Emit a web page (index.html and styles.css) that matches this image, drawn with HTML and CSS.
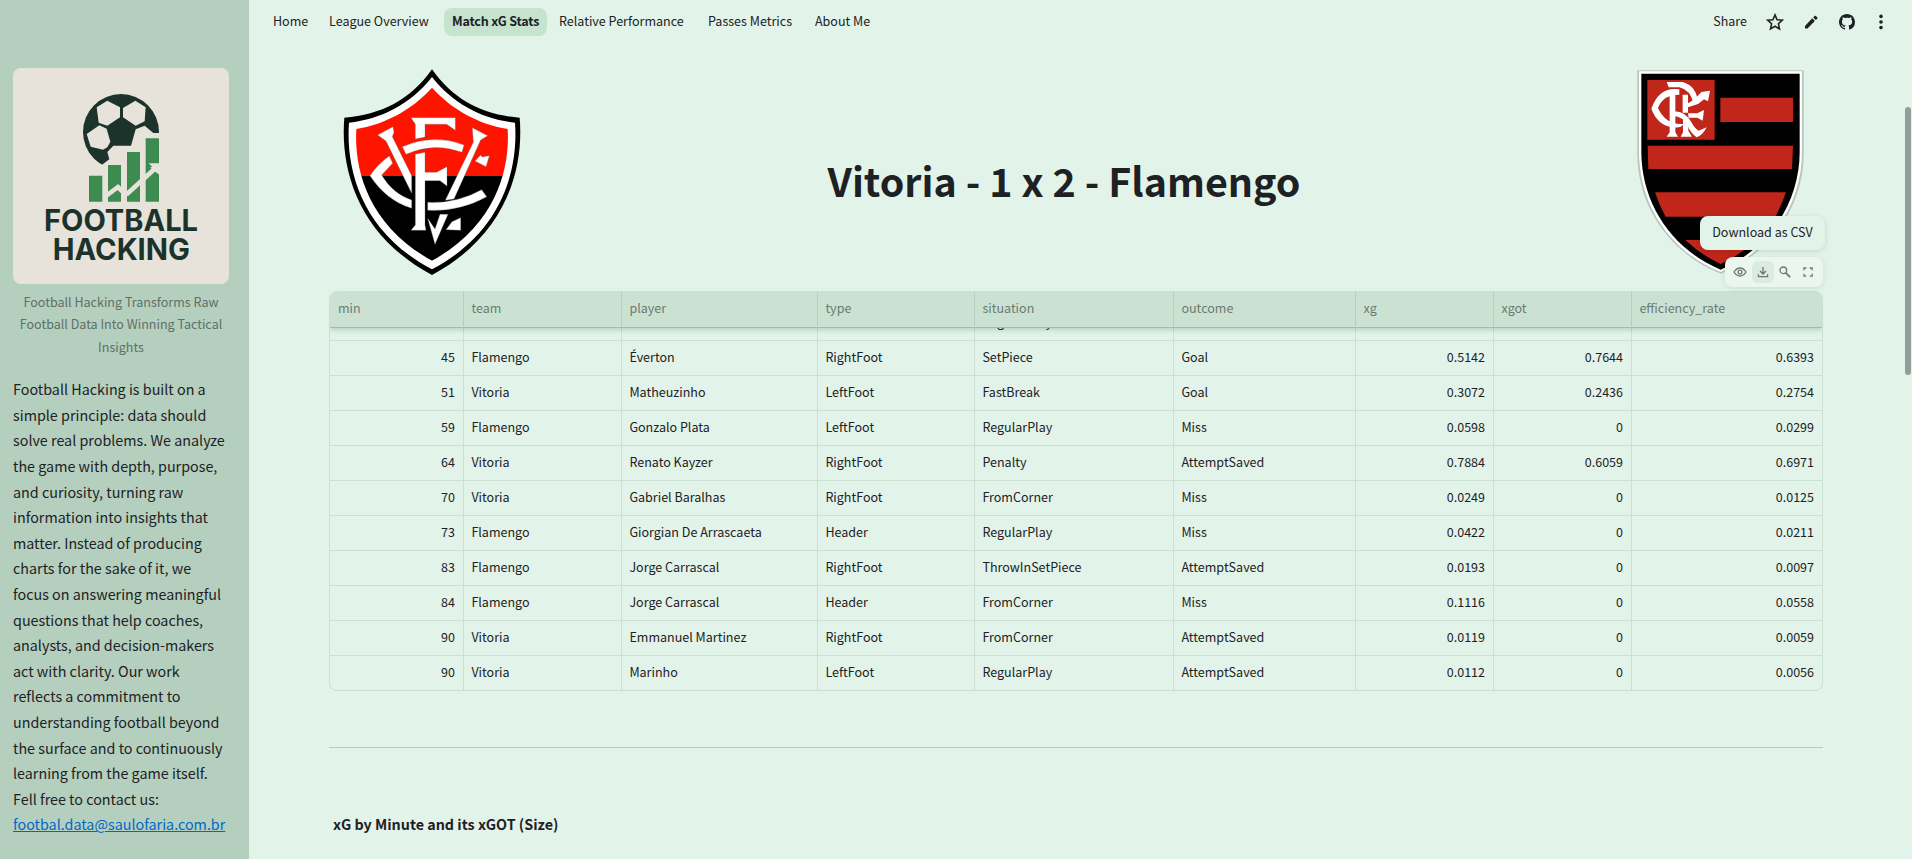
FILE: index.html
```
<!DOCTYPE html>
<html lang="en">
<head>
    <meta charset="UTF-8">
    <meta name="viewport" content="width=device-width, initial-scale=1.0">
    <title>Match xG Stats</title>
    <link rel="stylesheet" href="styles.css">
</head>
<body>
    <aside class="sidebar">
        <svg class="brand" viewBox="39 54 648 648">
            <rect class="brand-bg" x="39" y="54" width="648" height="648"/>
            <circle class="brand-dark" cx="363" cy="246" r="114"/>
            <g class="brand-bg">
                <path d="M290 172L322 152L360 172V202L322 227L296 218Z"/>
                <path d="M369 174L406 152L437 172L434 214L407 227L369 202Z"/>
                <path d="M260 252L298 226L320 236L331 275L322 292L309 299L272 290Z"/>
                <path d="M490 249H460L434 227L407 238L393 287H340L322 306L328 328L304 346V400H500Z"/>
            </g>
            <path class="brand-green" d="M267 377h40v78h-40zM324 345h39v110h-39zM381 306h39v149h-39zM437 265h40v190h-40z"/>
            <path class="brand-line" d="M318 438L354 411L374 431L382 431L466 355"/>
            <path class="brand-bg" d="M446 340H480V376L462 362L450 352L457 351Z"/>
            <text class="brand-text" x="132" y="544" textLength="462" lengthAdjust="spacingAndGlyphs">FOOTBALL</text>
            <text class="brand-text" x="158" y="629" textLength="412" lengthAdjust="spacingAndGlyphs">HACKING</text>
        </svg>
        <p class="caption">Football Hacking Transforms Raw<br>Football Data Into Winning Tactical<br>Insights</p>
        <p class="about">
            Football Hacking is built on a<br>simple principle: data should<br>solve real problems. We analyze<br>the game with depth, purpose,<br>and curiosity, turning raw<br>information into insights that<br>matter. Instead of producing<br>charts for the sake of it, we<br>focus on answering meaningful<br>questions that help coaches,<br>analysts, and decision-makers<br>act with clarity. Our work<br>reflects a commitment to<br>understanding football beyond<br>the surface and to continuously<br>learning from the game itself.<br>Fell free to contact us:<br>
            <a href="mailto:footbal.data@saulofaria.com.br">footbal.data@saulofaria.com.br</a>
        </p>
    </aside>

    <main class="main">
        <header class="topbar">
            <nav class="nav">
                <a class="tab tab-home">Home</a>
                <a class="tab tab-league">League Overview</a>
                <a class="tab tab-match active">Match xG Stats</a>
                <a class="tab tab-relative">Relative Performance</a>
                <a class="tab tab-passes">Passes Metrics</a>
                <a class="tab">About Me</a>
            </nav>
            <div class="actions">
                <span class="share">Share</span>
                <svg class="icon" viewBox="0 0 18 18"><path class="line" d="M9 1.9L11.1 6.7L16.3 7.2L12.4 10.7L13.5 15.9L9 13.2L4.5 15.9L5.6 10.7L1.7 7.2L6.9 6.7Z"/></svg>
                <svg class="icon" viewBox="0 0 24 24"><path d="M4 17.2V20.5h3.3L17.2 10.600l-3.600-3.600zM20.300 7.500c.5-.5.5-1.200 0-1.700l-1.800-1.800c-.5-.5-1.200-.5-1.700 0l-1.900 1.900 3.500 3.500z"/></svg>
                <svg class="icon" viewBox="-1 -1 18 18"><path d="M8 0C3.580 0 0 3.580 0 8c0 3.540 2.290 6.530 5.470 7.590.4.07.55-.17.55-.38 0-.19-.01-.82-.01-1.490-2.010.37-2.530-.49-2.690-.94-.09-.23-.48-.94-.82-1.130-.28-.15-.68-.52-.01-.53.63-.01 1.080.58 1.230.82.72 1.210 1.870.87 2.330.66.07-.52.28-.87.51-1.070-1.780-.2-3.640-.89-3.640-3.950 0-.87.31-1.590.82-2.150-.08-.2-.36-1.020.08-2.120 0 0 .67-.21 2.200.82.64-.18 1.320-.27 2-.27s1.360.09 2 .27c1.530-1.040 2.200-.82 2.200-.82.44 1.100.16 1.920.08 2.120.51.56.82 1.270.82 2.150 0 3.070-1.870 3.750-3.650 3.950.29.25.54.73.54 1.480 0 1.070-.01 1.930-.01 2.200 0 .21.15.46.55.38A8.010 8.010 0 0016 8c0-4.420-3.580-8-8-8z"/></svg>
                <svg class="icon dots" viewBox="0 0 18 18"><circle cx="9" cy="3.400" r="1.800"/><circle cx="9" cy="9" r="1.800"/><circle cx="9" cy="14.600" r="1.800"/></svg>
            </div>
        </header>

        <section class="match">
            <svg class="vitoria" viewBox="69 42 534 618">
                <path d="M336 43C400 135 490 180 599 188C612 340 560 540 336 660C112 540 60 340 73 188C182 180 272 135 336 43Z"/>
                <path class="white" d="M336 66C400 148 490 193 585 203C595 340 550 530 336 643C122 530 77 340 87 203C182 193 272 148 336 66Z"/>
                <clipPath id="vitoria-field"><path d="M336 98C400 168 480 208 563 222C570 340 530 510 336 617C142 510 102 340 109 222C192 208 272 168 336 98Z"/></clipPath>
                <g clip-path="url(#vitoria-field)">
                    <rect class="vit-red" x="90" y="90" width="490" height="273"/>
                    <rect x="90" y="363" width="490" height="270"/>
                </g>
                <g class="monogram">
                    <path d="M173 240L219 215L222 232L217 245L275 362V415L198 258Z"/>
                    <path d="M457 218L503 242L482 255L402 432L376 436L460 262Z"/>
                    <path d="M323 490L345 522L360 478H384L345 568Z"/>
                    <path d="M273 188H406V226L380 208H315V246L286 252V208Z"/>
                    <path d="M286 298L315 292V352H350L381 335V393L360 377H315V510L318 526H273L286 510Z"/>
                    <path d="M247 275Q340 235 432 270L426 292Q340 260 258 298Z"/>
                    <path d="M208 303L218 325L185 360Q218 416 275 435V460Q198 436 150 362Q174 326 208 303Z"/>
                    <path d="M323 442Q410 446 485 404L500 425Q420 470 323 466Z"/>
                    <path d="M465 318L482 300L486 306L508 302L498 335Z"/>
                    <path d="M378 524L396 500L422 488V526Z"/>
                </g>
            </svg>
            <h1>Vitoria - 1 x 2 - Flamengo</h1>
            <svg class="flamengo" viewBox="78 42 504 615">
                <path class="fla-shadow" d="M82 46H581V300C580 460 475 598 332 656C180 595 83 455 82 300Z"/>
                <path class="white" d="M87 49H576V290C576 450 480 590 332 651C180 590 87 450 87 290Z"/>
                <path d="M94 56H569V290C569 440 480 580 332 644C180 580 94 440 94 290Z"/>
                <g class="fla-red">
                    <path d="M112 75H314V254H112Z"/>
                    <path d="M331 128H549V201H331Z"/>
                    <path d="M113 272H549L546 342H115Z"/>
                    <path d="M135 412H528Q515 450 496 485H167Q147 450 135 412Z"/>
                    <path d="M226 555H438Q388 602 332 627Q272 599 226 555Z"/>
                </g>
                <g class="crf" transform="translate(78 27)">
                    <path d="M130 76Q70 66 46 134Q68 194 128 190Q140 187 142 180Q90 184 66 132Q80 92 130 92Z"/>
                    <path d="M101 92V205L92 218H126L118 205V92Z"/>
                    <path d="M140 92V146H156V92ZM141 165V205L134 218H168L157 200V180Z"/>
                    <path d="M92 54H140Q182 66 186 116L172 118Q164 78 130 70H98Z"/>
                    <path d="M156 118L176 106L196 84L222 80L216 112L204 106L186 120L156 130Z"/>
                    <path d="M156 148L184 148L204 138L200 170L184 161H158Z"/>
                    <path d="M110 142Q150 140 168 178Q178 196 188 200L212 190Q200 214 182 220Q164 208 154 184Q144 158 110 156Z"/>
                </g>
            </svg>
            <div class="tooltip">Download as CSV</div>
            <div class="toolbar">
                <span class="tool"><svg viewBox="0 0 14 14"><path class="line" d="M1 7Q3.500 3 7 3T13 7Q10.500 11 7 11T1 7Z"/><circle class="line" cx="7" cy="7" r="1.900"/></svg></span>
                <span class="tool hovered"><svg viewBox="0 0 14 14"><path class="line" d="M7 2V8.800M4 6L7 9L10 6M2.400 9.200V11.700H11.600V9.200"/></svg></span>
                <span class="tool"><svg viewBox="0 0 14 14"><circle class="line" cx="5.300" cy="5.300" r="3.300"/><path class="line thick" d="M7.800 7.800L12.200 12.200"/></svg></span>
                <span class="tool"><svg viewBox="0 0 14 14"><path class="line" d="M5.300 3H3V5.300M8.700 3H11.200V5.300M5.300 11.200H3V8.800M8.700 11.200H11.200V8.800"/></svg></span>
            </div>
        </section>

        <section class="table">
            <div class="row head"><span>min</span><span>team</span><span>player</span><span>type</span><span>situation</span><span>outcome</span><span>xg</span><span>xgot</span><span>efficiency_rate</span></div>
            <div class="rows">
                <div class="row scrolled"><span></span><span></span><span></span><span></span><span>RegularPlay</span><span></span><span></span><span></span><span></span></div>
                <div class="row"><span>45</span><span>Flamengo</span><span>Éverton</span><span>RightFoot</span><span>SetPiece</span><span>Goal</span><span>0.5142</span><span>0.7644</span><span>0.6393</span></div>
                <div class="row"><span>51</span><span>Vitoria</span><span>Matheuzinho</span><span>LeftFoot</span><span>FastBreak</span><span>Goal</span><span>0.3072</span><span>0.2436</span><span>0.2754</span></div>
                <div class="row"><span>59</span><span>Flamengo</span><span>Gonzalo Plata</span><span>LeftFoot</span><span>RegularPlay</span><span>Miss</span><span>0.0598</span><span>0</span><span>0.0299</span></div>
                <div class="row"><span>64</span><span>Vitoria</span><span>Renato Kayzer</span><span>RightFoot</span><span>Penalty</span><span>AttemptSaved</span><span>0.7884</span><span>0.6059</span><span>0.6971</span></div>
                <div class="row"><span>70</span><span>Vitoria</span><span>Gabriel Baralhas</span><span>RightFoot</span><span>FromCorner</span><span>Miss</span><span>0.0249</span><span>0</span><span>0.0125</span></div>
                <div class="row"><span>73</span><span>Flamengo</span><span>Giorgian De Arrascaeta</span><span>Header</span><span>RegularPlay</span><span>Miss</span><span>0.0422</span><span>0</span><span>0.0211</span></div>
                <div class="row"><span>83</span><span>Flamengo</span><span>Jorge Carrascal</span><span>RightFoot</span><span>ThrowInSetPiece</span><span>AttemptSaved</span><span>0.0193</span><span>0</span><span>0.0097</span></div>
                <div class="row"><span>84</span><span>Flamengo</span><span>Jorge Carrascal</span><span>Header</span><span>FromCorner</span><span>Miss</span><span>0.1116</span><span>0</span><span>0.0558</span></div>
                <div class="row"><span>90</span><span>Vitoria</span><span>Emmanuel Martinez</span><span>RightFoot</span><span>FromCorner</span><span>AttemptSaved</span><span>0.0119</span><span>0</span><span>0.0059</span></div>
                <div class="row"><span>90</span><span>Vitoria</span><span>Marinho</span><span>LeftFoot</span><span>RegularPlay</span><span>AttemptSaved</span><span>0.0112</span><span>0</span><span>0.0056</span></div>
            </div>
        </section>

        <hr>
        <h2>xG by Minute and its xGOT (Size)</h2>
        <div class="scrollbar"></div>
    </main>
</body>
</html>
```
FILE: styles.css
```
* {
    box-sizing: border-box;
}
body {
    display: flex;
    height: 859px;
    margin: 0;
    overflow: hidden;
    background-color: #e2f4e9;
    color: #1e2124;
    font-family: "Source Sans Pro", "Noto Sans CJK SC", sans-serif;
    font-size: 12.54px;
}
.sidebar {
    flex: none;
    width: 249px;
    padding: 68px 13px 0;
    background-color: #b4cfbe;
}
.brand {
    display: block;
    width: 216px;
    height: 216px;
    border-radius: 8px;
}
.brand-bg {
    fill: #e7e3da;
}
.brand-dark {
    fill: #1b332b;
}
.brand-green {
    fill: #3e8b51;
}
.brand-line {
    fill: none;
    stroke: #e7e3da;
    stroke-width: 14px;
}
.brand-text {
    fill: #1b332b;
    font-family: Inter, sans-serif;
    font-size: 89px;
    font-weight: 700;
}
.caption {
    width: 216px;
    margin: 7px 0 0;
    color: #5f7067;
    text-align: center;
    line-height: 22.4px;
    white-space: nowrap;
}
.about {
    margin: 18px 0 0;
    font-size: 14.33px;
    line-height: 25.6px;
    white-space: nowrap;
}
.about a {
    color: #0068c9;
}
.main {
    position: relative;
    flex: 1;
    min-width: 0;
    padding: 0 89px 0 80px;
}
.topbar {
    display: flex;
    justify-content: space-between;
    height: 56px;
    margin: 0 -67px 0 -64px;
    padding-top: 8px;
}
.nav {
    display: flex;
    align-items: flex-start;
}
.tab {
    height: 28px;
    padding: 0 8px;
    border-radius: 8px;
    line-height: 25px;
    white-space: nowrap;
}
.tab-home {
    width: 56px;
}
.tab-league {
    width: 123px;
}
.tab-match {
    width: 103px;
    margin-right: 4px;
}
.tab-relative {
    width: 149px;
}
.tab-passes {
    width: 107px;
}
.tab.active {
    background-color: #c6e3d0;
    font-weight: 700;
    letter-spacing: -0.2px;
}
.actions {
    display: flex;
    align-items: center;
    gap: 18px;
    height: 27px;
}
.share {
    margin: -2px 1px 0 0;
}
.icon {
    width: 18px;
    height: 18px;
    fill: #1e2124;
}
.icon.dots {
    margin-left: -2px;
}
.line {
    fill: none;
    stroke: currentColor;
    stroke-width: 1.3px;
}
.icon .line {
    stroke-width: 1.6px;
}
.match {
    position: relative;
    display: flex;
    justify-content: space-between;
    height: 235px;
    padding: 13px 19px 0 14px;
}
.match h1 {
    margin: 76px 0 0;
    padding-right: 29px;
    font-size: 39.4px;
    font-weight: 700;
    line-height: 70px;
    white-space: nowrap;
}
.vitoria {
    width: 178px;
    height: 206px;
}
.flamengo {
    width: 168px;
    height: 205px;
}
.white,
.crf {
    fill: #fff;
}
.vit-red {
    fill: #ff1400;
}
.monogram {
    fill: #fff;
    stroke: #777;
    stroke-width: 1px;
}
.fla-red {
    fill: #c1261a;
}
.fla-shadow {
    fill: #b9c4be;
}
.tooltip {
    position: absolute;
    right: -2px;
    top: 160px;
    width: 125px;
    height: 34px;
    border-radius: 8px;
    background-color: #e2f4e9;
    box-shadow: 0 1px 5px rgba(0, 0, 0, 0.14);
    line-height: 31px;
    text-align: center;
}
.toolbar {
    position: absolute;
    right: 0;
    top: 201px;
    display: flex;
    align-items: center;
    gap: 1px;
    width: 98px;
    height: 30px;
    padding: 0 4px;
    border-radius: 8px;
    background-color: #ebf6f0;
    box-shadow: 0 1px 6px rgba(0, 0, 0, 0.1);
    color: #6d7772;
}
.tool {
    display: flex;
    align-items: center;
    justify-content: center;
    width: 22px;
    height: 22px;
    border-radius: 6px;
}
.tool svg {
    width: 14px;
    height: 14px;
}
.tool.hovered {
    background-color: #d9ecdf;
}
.tool .thick {
    stroke-width: 1.7px;
}
.table {
    border: 1px solid #cbdfd3;
    border-radius: 8px;
    overflow: hidden;
}
.row {
    display: grid;
    grid-template-columns: 134px 158px 196px 157px 199px 182px 138px 138px 190px;
    height: 35px;
}
.row span {
    padding: 0 8px 0 7.4px;
    border-right: 1px solid #cbdfd3;
    border-bottom: 1px solid #cbdfd3;
    line-height: 31px;
    white-space: nowrap;
}
.row span:first-child {
    padding-left: 8px;
}
.row span:last-child {
    border-right: 0;
}
.rows .row:last-child span {
    border-bottom: 0;
}
.rows .row:last-child {
    height: 34px;
}
.rows span:first-child,
.rows span:nth-child(n + 7) {
    text-align: right;
}
.row.head {
    position: relative;
    height: 36px;
    background-color: #cbe2d3;
    box-shadow: 0 1px 6px rgba(60, 90, 70, 0.3);
    color: #6b7b72;
}
.row.head span {
    border-right-color: #b9cec1;
    border-bottom-color: #a3baac;
    line-height: 32px;
}
.rows {
    overflow: hidden;
}
.row.scrolled {
    margin-top: -22px;
}
hr {
    height: 1px;
    margin: 56px 0 0;
    border: 0;
    background-color: #b8cbc0;
}
h2 {
    margin: 63px 4px 0;
    font-size: 14.33px;
    font-weight: 700;
    line-height: 26px;
}
.scrollbar {
    position: absolute;
    top: 107px;
    right: 1px;
    width: 6px;
    height: 268px;
    border-radius: 3px;
    background-color: #929f98;
}
```
